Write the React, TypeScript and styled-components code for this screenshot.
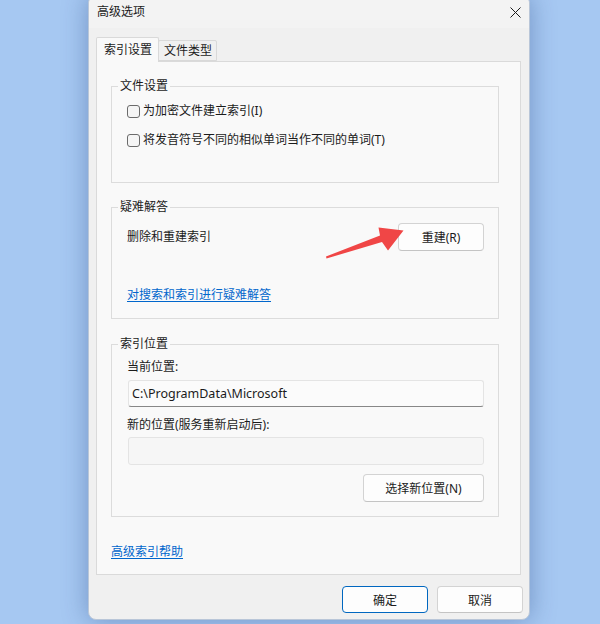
import styled, { createGlobalStyle } from "styled-components";

const ui = {
  desktop: "#a6c8f2",
  frame: "#f0f0f0",
  sheet: "#f9f9f9",
  line: "#dcdcdc",
  text: "#1b1b1b",
  link: "#0066cc",
  accent: "#0067c0",
};

const GlobalStyle = createGlobalStyle`
  html, body {
    margin: 0;
    padding: 0;
  }
  body {
    background: ${ui.desktop};
    font-family: "Noto Sans", "Noto Sans CJK SC", sans-serif;
    font-size: 12px;
    color: ${ui.text};
  }
  * {
    box-sizing: border-box;
  }
`;

const Desktop = styled.div`
  position: relative;
  width: 600px;
  height: 624px;
  overflow: hidden;
  padding-left: 88px;
  background: ${ui.desktop};
`;

const Window = styled.div`
  margin-top: -5px;
  width: 442px;
  height: 625px;
  display: flex;
  flex-direction: column;
  background: ${ui.frame};
  border: 1px solid #b9c6d8;
  border-radius: 8px;
  box-shadow: 0 0 26px rgba(30, 60, 120, 0.38);
`;

const TitleBar = styled.div`
  height: 32px;
  display: flex;
  align-items: center;
  justify-content: space-between;
  padding-left: 8px;
  background: #f3f3f3;
  border-radius: 8px 8px 0 0;
`;

const Title = styled.span`
  line-height: 16px;
`;

const CloseButton = styled.button`
  appearance: none;
  border: none;
  background: none;
  width: 28px;
  height: 32px;
  padding: 0;
  display: flex;
  align-items: center;
  justify-content: center;
  color: #1a1a1a;
`;

const TabStrip = styled.div`
  margin-top: 9px;
  height: 24px;
  display: flex;
  align-items: flex-end;
  padding-left: 7px;
`;

const Tab = styled.div<{ $active?: boolean }>`
  position: relative;
  z-index: ${(p) => (p.$active ? 2 : 1)};
  height: ${(p) => (p.$active ? "25px" : "21px")};
  margin-bottom: ${(p) => (p.$active ? "-1px" : "0")};
  margin-left: ${(p) => (p.$active ? "0" : "-1px")};
  padding: ${(p) => (p.$active ? "4px 6px 0 7px" : "2px 4px 0 5px")};
  line-height: 16px;
  background: ${(p) => (p.$active ? ui.sheet : "#f0f0f0")};
  border: 1px solid #d9d9d9;
  border-bottom: ${(p) => (p.$active ? "none" : "1px solid #d9d9d9")};
  border-radius: 2px 2px 0 0;
`;

const Sheet = styled.div`
  margin: 0 8px 0 7px;
  height: 514px;
  display: flex;
  flex-direction: column;
  padding: 24px 21px 0 14px;
  background: ${ui.sheet};
  border: 1px solid #dadada;
`;

const Group = styled.div<{ $height: number; $gap?: number }>`
  height: ${(p) => p.$height}px;
  margin-top: ${(p) => p.$gap ?? 0}px;
  display: flex;
  flex-direction: column;
  padding: 0 14px 0 15px;
  border: 1px solid ${ui.line};
`;

const Legend = styled.span`
  align-self: flex-start;
  margin: -9px 0 0 -9px;
  padding: 0 2px;
  line-height: 16px;
  background: ${ui.sheet};
`;

const CheckRow = styled.label<{ $gap: number }>`
  margin-top: ${(p) => p.$gap}px;
  display: flex;
  align-items: center;
  gap: 3px;
  line-height: 16px;
`;

const Box = styled.span`
  width: 13px;
  height: 13px;
  border: 1px solid #6b6b6b;
  border-radius: 3px;
  background: #f5f5f5;
`;

const Row = styled.div<{ $gap: number }>`
  margin-top: ${(p) => p.$gap}px;
  display: flex;
  align-items: center;
  justify-content: space-between;
`;

const Label = styled.span<{ $gap?: number }>`
  margin-top: ${(p) => p.$gap ?? 0}px;
  line-height: 16px;
`;

const Link = styled.a<{ $gap: number }>`
  margin-top: ${(p) => p.$gap}px;
  align-self: flex-start;
  line-height: 16px;
  color: ${ui.link};
  text-decoration: underline;
  text-underline-offset: 2px;
  cursor: pointer;
`;

const PathField = styled.div<{ $gap: number; $empty?: boolean }>`
  margin: ${(p) => p.$gap}px 0 0 1px;
  height: ${(p) => (p.$empty ? 28 : 27)}px;
  display: flex;
  align-items: center;
  padding-left: 3px;
  font-size: 12.5px;
  background: ${(p) => (p.$empty ? "#f6f6f6" : "#fbfbfb")};
  border: 1px solid #e4e4e4;
  border-bottom-color: ${(p) => (p.$empty ? "#e4e4e4" : "#878787")};
  border-radius: 3px;
`;

const Button = styled.button<{ $primary?: boolean; $width?: number; $gap?: number }>`
  appearance: none;
  width: ${(p) => p.$width ?? 86}px;
  height: ${(p) => (p.$primary !== undefined ? 27 : 28)}px;
  margin-top: ${(p) => p.$gap ?? 0}px;
  padding: 0;
  font: inherit;
  color: ${ui.text};
  background: #fdfdfd;
  border: 1px solid ${(p) => (p.$primary ? ui.accent : "#d3d3d3")};
  border-bottom-color: ${(p) => (p.$primary ? ui.accent : "#c4c4c4")};
  border-radius: 4px;
`;

const RightButton = styled(Button)`
  align-self: flex-end;
`;

const Footer = styled.div`
  display: flex;
  justify-content: flex-end;
  gap: 9px;
  padding: 11px 6px 0 0;
`;

const Callout = styled.svg`
  position: absolute;
  left: 0;
  top: 0;
  pointer-events: none;
`;

function CloseGlyph() {
  return (
    <svg width="11" height="11" viewBox="0 0 11 11" fill="none">
      <path d="M0.5 0.5l10 10M10.5 0.5l-10 10" stroke="currentColor" strokeWidth="1" />
    </svg>
  );
}

export default function App() {
  return (
    <>
      <GlobalStyle />
      <Desktop>
        <Window>
          <TitleBar>
            <Title>高级选项</Title>
            <CloseButton aria-label="关闭">
              <CloseGlyph />
            </CloseButton>
          </TitleBar>

          <TabStrip>
            <Tab $active>索引设置</Tab>
            <Tab>文件类型</Tab>
          </TabStrip>

          <Sheet>
            <Group $height={97}>
              <Legend>文件设置</Legend>
              <CheckRow $gap={9}>
                <Box />
                为加密文件建立索引(I)
              </CheckRow>
              <CheckRow $gap={13}>
                <Box />
                将发音符号不同的相似单词当作不同的单词(T)
              </CheckRow>
            </Group>

            <Group $height={112} $gap={24}>
              <Legend>疑难解答</Legend>
              <Row $gap={8}>
                <Label>删除和重建索引</Label>
                <Button>重建(R)</Button>
              </Row>
              <Link $gap={36}>对搜索和索引进行疑难解答</Link>
            </Group>

            <Group $height={173} $gap={25}>
              <Legend>索引位置</Legend>
              <Label $gap={7}>当前位置:</Label>
              <PathField $gap={5}>C:\ProgramData\Microsoft</PathField>
              <Label $gap={10}>新的位置(服务重新启动后):</Label>
              <PathField $gap={4} $empty />
              <RightButton $width={121} $gap={9}>
                选择新位置(N)
              </RightButton>
            </Group>

            <Link $gap={27}>高级索引帮助</Link>
          </Sheet>

          <Footer>
            <Button $primary>确定</Button>
            <Button $primary={false}>取消</Button>
          </Footer>
        </Window>

        <Callout width="600" height="624" viewBox="0 0 600 624">
          <polygon
            points="326.5,258.5 382,242 388,250.5 403.5,230.5 378.5,227.5 380,235.5 326,256.5"
            fill="#f04646"
            strokeLinejoin="round"
          />
        </Callout>
      </Desktop>
    </>
  );
}
